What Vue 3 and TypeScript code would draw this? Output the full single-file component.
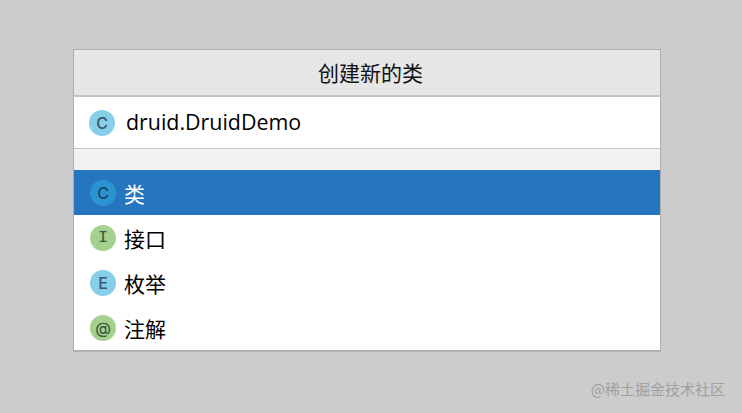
<template>
  <div class="page">
    <div class="dialog">
      <div class="title">创建新的类</div>
      <div class="input-row">
        <span class="badge blue">C</span>
        <span class="input-text">druid.DruidDemo</span>
      </div>
      <div class="spacer"></div>
      <ul class="list">
        <li v-for="item in items" :key="item.label" class="row" :class="{ active: item.active }">
          <span class="badge" :class="[item.color, item.cls]">{{ item.icon }}</span>
          <span class="label">{{ item.label }}</span>
        </li>
      </ul>
    </div>
    <div class="mark">@稀土掘金技术社区</div>
  </div>
</template>

<script setup lang="ts">
interface KindItem {
  icon: string;
  label: string;
  color: string;
  cls?: string;
  active?: boolean;
}

const items: KindItem[] = [
  { icon: 'C', label: '类', color: 'blue', active: true },
  { icon: 'I', label: '接口', color: 'green', cls: 'mono' },
  { icon: 'E', label: '枚举', color: 'blue' },
  { icon: '@', label: '注解', color: 'green' },
];
</script>

<style>
html, body {
  margin: 0;
  background: #cccccc;
}
</style>

<style scoped>
.page {
  position: relative;
  width: 742px;
  height: 413px;
  padding: 49px 0 0 73px;
  box-sizing: border-box;
  background: #cccccc;
  font-family: "Noto Sans CJK SC", "Noto Sans", sans-serif;
  overflow: hidden;
}

.dialog {
  width: 588px;
  height: 302px;
  box-sizing: border-box;
  border: 1px solid #adadad;
  background: #fff;
  box-shadow: 0 1px 0 #b4b4b4;
  display: flex;
  flex-direction: column;
}

.title {
  height: 47px;
  flex: none;
  box-sizing: border-box;
  border-bottom: 2px solid #c4c4c4;
  padding: 0 0 2px 7px;
  background: #e6e6e6;
  display: flex;
  align-items: center;
  justify-content: center;
  font-size: 21px;
  color: #111;
}

.input-row {
  height: 52px;
  flex: none;
  box-sizing: border-box;
  border-bottom: 1px solid #c6c6c6;
  display: flex;
  align-items: center;
  padding-left: 15px;
  gap: 11px;
}

.input-text {
  font-family: "Open Sans", "Noto Sans", sans-serif;
  font-size: 21.4px;
  line-height: 26px;
  margin-top: -2px;
  color: #000;
}

.spacer {
  height: 21px;
  flex: none;
  background: #f2f2f2;
}

.list {
  list-style: none;
  margin: 0;
  padding: 0;
  flex: 1;
}

.row {
  height: 45px;
  display: flex;
  align-items: center;
  padding-left: 16px;
  gap: 8px;
  font-size: 21px;
  color: #000;
}

.row.active {
  background: #2675bf;
  color: #fff;
}

.badge {
  width: 26px;
  height: 26px;
  flex: none;
  border-radius: 50%;
  display: flex;
  align-items: center;
  justify-content: center;
  font-family: Inter, sans-serif;
  font-size: 16px;
  font-weight: 500;
  color: #38566e;
}

.badge.blue {
  background: #87cfe8;
}

.badge.green {
  background: #a5d18f;
  color: #3d5a3a;
}

.badge.mono {
  font-family: "Liberation Mono", monospace;
  font-size: 17px;
  font-weight: 400;
}

.row.active .badge {
  background: #2b93cf;
  color: #15466b;
}

.mark {
  position: absolute;
  right: 17px;
  top: 378px;
  font-size: 15px;
  line-height: 22px;
  color: #a0a0a0;
}
</style>
